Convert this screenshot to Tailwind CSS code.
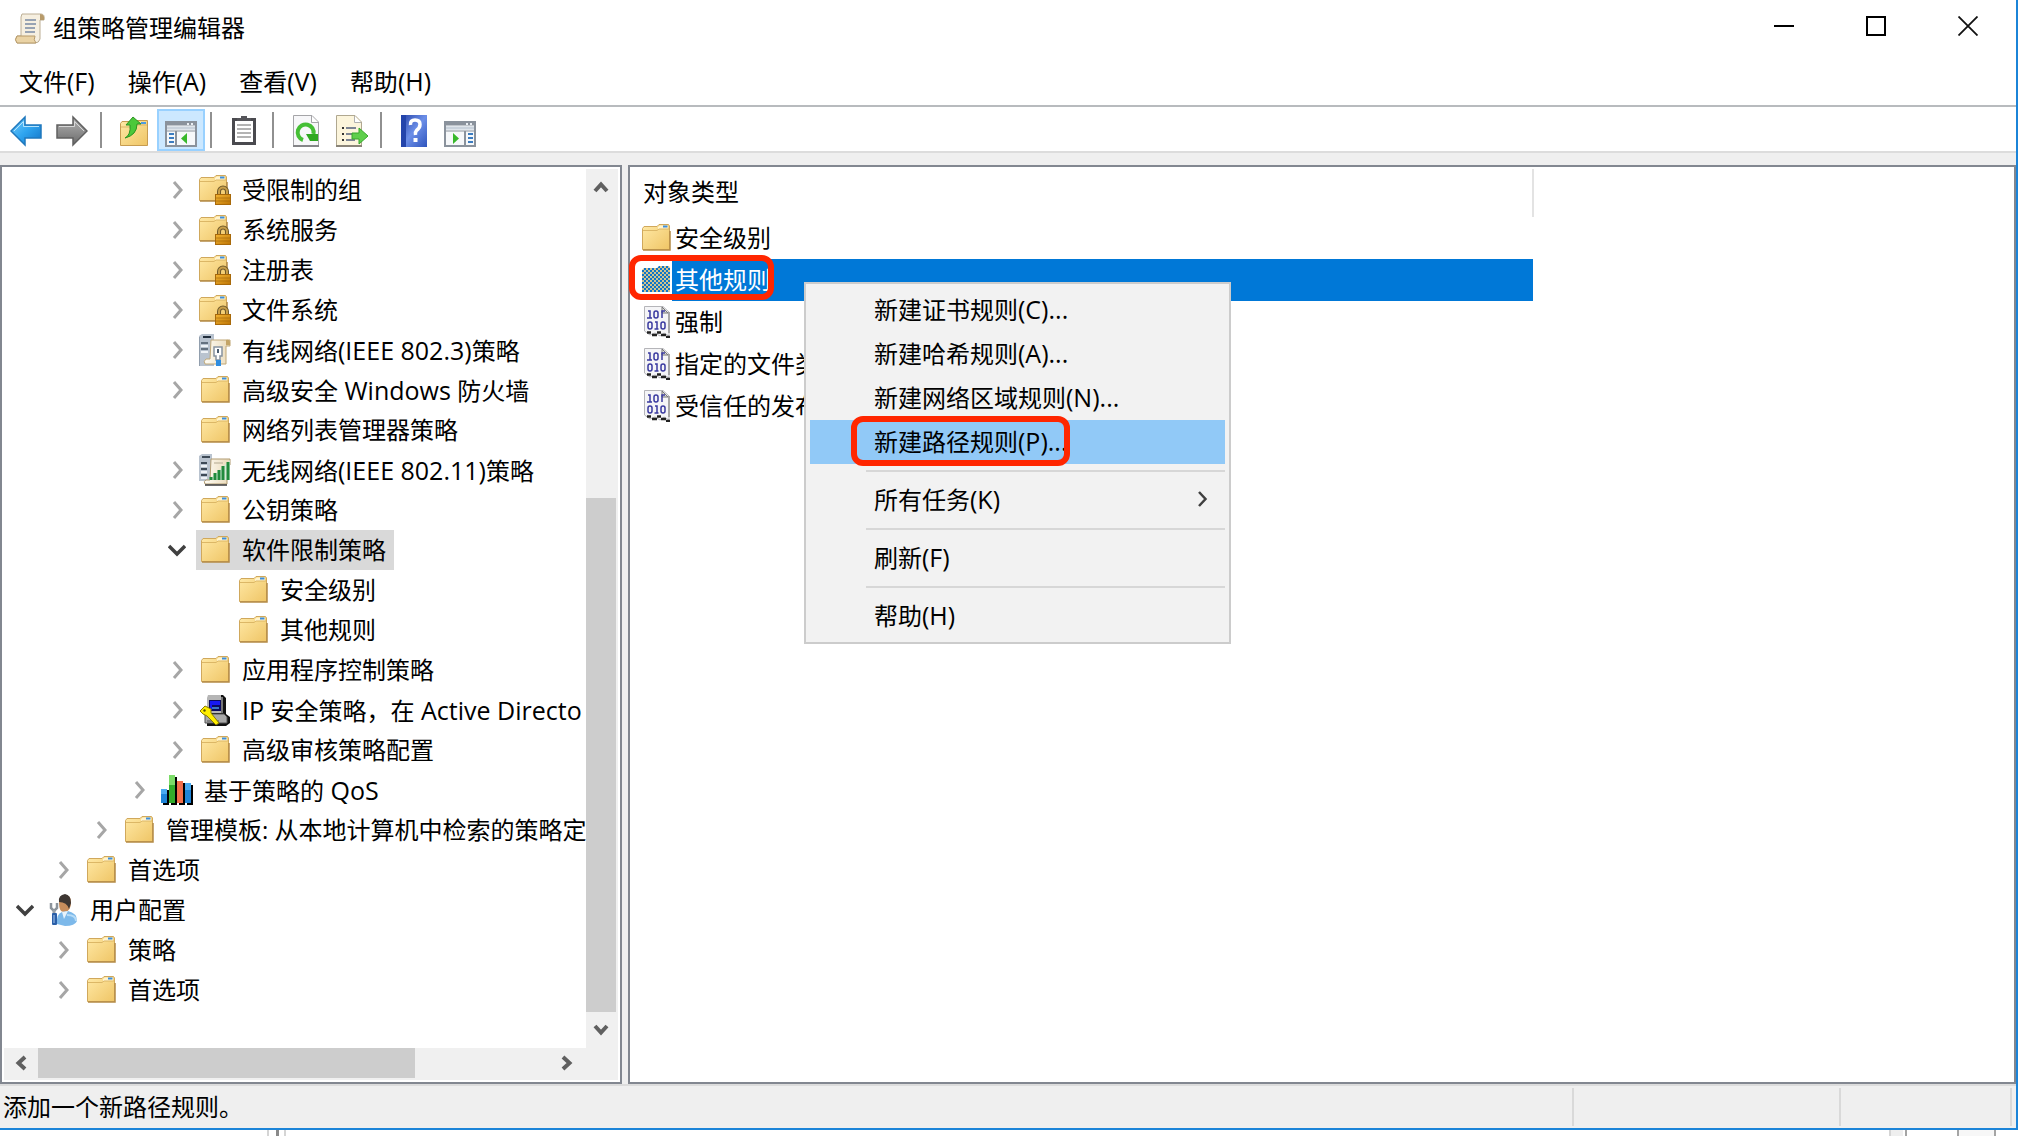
<!DOCTYPE html>
<html lang="zh-CN">
<head>
<meta charset="utf-8">
<title>组策略管理编辑器</title>
<script src="https://cdn.jsdelivr.net/npm/@tailwindcss/browser@4"></script>
</head>
<body class="min-h-screen bg-white font-['Open_Sans','Noto_Sans_CJK_SC',sans-serif] text-[24px] leading-[40px] text-black">
<svg class="absolute size-0" aria-hidden="true">
  <defs>
    <linearGradient id="gFolder" x1="0" y1="0" x2="1" y2="1"><stop offset="0" stop-color="#ffe9a6"/><stop offset="1" stop-color="#efc566"/></linearGradient>
    <linearGradient id="gBlue" x1="0" y1="0" x2="1" y2="1"><stop offset="0" stop-color="#7fd0fb"/><stop offset=".5" stop-color="#2fa5f0"/><stop offset="1" stop-color="#1272c4"/></linearGradient>
    <linearGradient id="gGray" x1="0" y1="0" x2="0" y2="1"><stop offset="0" stop-color="#b5b5b5"/><stop offset="1" stop-color="#6a6a6a"/></linearGradient>
    <linearGradient id="gHelp" x1="0" y1="0" x2="1" y2="1"><stop offset="0" stop-color="#2744a8"/><stop offset=".5" stop-color="#6c8fe8"/><stop offset="1" stop-color="#2f55bd"/></linearGradient>
    <linearGradient id="gLock" x1="0" y1="0" x2="1" y2="1"><stop offset="0" stop-color="#f3b533"/><stop offset="1" stop-color="#bd7506"/></linearGradient>
    <linearGradient id="gPaper" x1="0" y1="0" x2="1" y2="0"><stop offset="0" stop-color="#fffdf6"/><stop offset="1" stop-color="#e9d9b8"/></linearGradient>
    <pattern id="pSel" width="4" height="4" patternUnits="userSpaceOnUse"><rect width="4" height="4" fill="#d3c48d"/><path d="M0 0h2v2H0zM2 2h2v2H2z" fill="#0f75c9"/></pattern>
    <symbol id="folder" viewBox="0 0 32 32">
      <path d="M2.500 6.500 4 4.500H17L19 2.500H28.500L29.500 4V27.500H2.500Z" fill="url(#gFolder)" stroke="#d0a85c"/>
      <path d="M18 5 20 3.500H28V7H18Z" fill="#fff4cf"/><path d="M3 8.500H17L19 7H29" fill="none" stroke="#dcb766"/>
      <path d="M23 4.500h4.500" stroke="#3e8fdc" stroke-width="2"/><path d="M3 28H30V9" fill="none" stroke="#b48a45" stroke-width="1.500"/>
    </symbol>
    <symbol id="lockfolder" viewBox="0 0 32 32">
      <use href="#folder" x="-2" y="-1" width="32" height="32"/>
      <path d="M20 21V17.500a4 4 0 0 1 8 0V21" fill="none" stroke="#6f5a2c" stroke-width="4"/><path d="M20 21V17.500a4 4 0 0 1 8 0V21" fill="none" stroke="#c9a04a" stroke-width="2"/>
      <rect x="16.500" y="20.500" width="15" height="10" fill="url(#gLock)" stroke="#a8690a"/><path d="M17 24h14M17 27h14" stroke="#8f5a05" stroke-opacity=".5"/>
    </symbol>
    <symbol id="selfolder" viewBox="0 0 32 32"><path d="M2 6 4 4H17L19 2H29L30 4V28H2Z" fill="url(#pSel)"/></symbol>
    <symbol id="wired" viewBox="0 0 32 32">
      <path d="M0 2 3 0H15V32H0Z" fill="#b9c3cf"/><path d="M0 32V3" stroke="#8492a2" stroke-width="1.500"/><path d="M4 3h8" stroke="#222f3c" stroke-width="2"/><path d="M2 9h7M2 15h7" stroke="#64717f" stroke-width="2"/><path d="M2 12h7M2 18h7" stroke="#eef2f6" stroke-width="2"/>
      <path d="M12 6H31V12H27V30H6Q4 27 7 25H11Z" fill="url(#gPaper)" stroke="#c0a878"/><path d="M27 6Q32 5 31 11H27Z" fill="#c3a467"/>
      <path d="M15 13H23V22H21V26H17V22H15Z" fill="#fff" stroke="#8793a0" stroke-width="1.500"/><path d="M19 15v4" stroke="#4a5c70" stroke-width="2"/><path d="M17 26H22V32H17Z" fill="#2f8de0"/>
    </symbol>
    <symbol id="wireless" viewBox="0 0 32 32">
      <path d="M0 2 3 0H13V27H0Z" fill="#b9c3cf"/><path d="M3 3h8M2 9h6M2 15h6M2 21h6" stroke="#3e4a57" stroke-width="2"/><path d="M2 12h6M2 18h6M2 24h6" stroke="#eef2f6" stroke-width="2"/>
      <path d="M12 5H31V11H28V30H6Q4 27 7 26H11Z" fill="url(#gPaper)" stroke="#b09a70"/><path d="M15 9h9" stroke="#c8bfa8" stroke-width="1.500"/>
      <path d="M10 26 31 6V26Z" fill="#d4e9d6"/><path d="M12 26v-3M16 26v-7M20 26V16M24 26V12M29 26V8" stroke="#1f8a3c" stroke-width="3"/><path d="M6 31h22" stroke="#3a3a3a" stroke-width="1.500"/>
    </symbol>
    <symbol id="ipsec" viewBox="0 0 32 32">
      <path d="M9 1H24L27 4V20L31 23V29L27 32H8V20L9 18Z" fill="#111"/><path d="M9 1H22V19H8V4Z" fill="#b5b5b5"/><path d="M23 3V19" stroke="#ddd"/><rect x="10" y="6" width="12" height="11" fill="#0b0b5e"/><path d="M11 7H21V11H13V16H11Z" fill="#1818f0"/><path d="M13 14h7" stroke="#4a9be8" stroke-width="1.500"/>
      <path d="M6 20H25L28 23V29H6Z" fill="#a9a9a9" stroke="#555"/><path d="M8 27h12" stroke="#555"/>
      <path d="M1 17 6 12 12 15V19L20 29 17 31 8 22 4 20Z" fill="#ffee00" stroke="#8a7b00"/><circle cx="5.500" cy="16.500" r="1.200" fill="#5a5000"/>
    </symbol>
    <symbol id="qos" viewBox="0 0 32 32">
      <path d="M2 16H8V31H2ZM10 3H16V31H10ZM18 9H24V31H18ZM26 11H32V31H26Z" fill="#000"/><path d="M0 15H6V29H0ZM24 9H30V29H24Z" fill="#1f84d8"/><path d="M0 15H6V20H0ZM24 9H30V16H24Z" fill="#4aaaf0"/><path d="M8 1H14V29H8Z" fill="#33ad2b"/><path d="M8 1H14V11H8Z" fill="#7cdc68"/><path d="M16 7H22V29H16Z" fill="#f46f4b"/>
    </symbol>
    <symbol id="user" viewBox="0 0 32 32">
      <path d="M12 9Q12 1 18 1T24 8Q24 17 18 18T12 9Z" fill="#c78d5c"/><path d="M12 8Q11 1 18 0Q24 1 24 9L22 15Q20 8 12 8Z" fill="#3d3632"/>
      <path d="M10 30Q9 20 15 18L21 17Q30 19 30 27Q28 32 18 32Z" fill="#7db9ea"/><path d="M15 18 17 25 21 17Z" fill="#e8f3fc"/><path d="M20 21Q29 21 29 27" fill="none" stroke="#b7dcf7" stroke-width="2"/>
      <path d="M4 9V14L7 17 10 14V9" fill="none" stroke="#8b939b" stroke-width="2.500"/><path d="M7 16V20" stroke="#9aa2aa" stroke-width="3"/><rect x="5" y="19" width="5" height="12" rx="1" fill="#2a5fa8"/><path d="M7 21v8" stroke="#a9c8ee"/>
    </symbol>
    <symbol id="object" viewBox="0 0 32 32">
      <path d="M4.500 .500H23L29 6V30L24 27 20 30 15 27 10 29 4.500 25Z" fill="#f5f5f7" stroke="#b5b5b9"/><path d="M22 1V7H28Z" fill="#ddd" stroke="#777"/><path d="M29 6V27" stroke="#777"/>
      <path d="M8 5h2v7M7 12h5M22 12V5h3" fill="none" stroke="#3a3aa0" stroke-width="1.500"/><rect x="14" y="5" width="4" height="7" rx="2" fill="none" stroke="#3a3aa0" stroke-width="1.500"/>
      <rect x="8" y="16" width="4" height="7" rx="2" fill="none" stroke="#3a3aa0" stroke-width="1.500"/><rect x="21" y="16" width="4" height="7" rx="2" fill="none" stroke="#3a3aa0" stroke-width="1.500"/><path d="M15 16h2v7M14.500 23h4" fill="none" stroke="#3a3aa0" stroke-width="1.500"/>
      <path d="M7 26.500H11M12 29H17M17 26.500H21M21 29H26M26 31H30" fill="none" stroke="#222" stroke-width="2.500"/>
    </symbol>
    <symbol id="chev" viewBox="0 0 18 18"><path d="M6 1 13 9 6 17" fill="none" stroke="#a6a6a6" stroke-width="3"/></symbol>
    <symbol id="open" viewBox="0 0 18 18"><path d="M1 5 9 13 17 5" fill="none" stroke="#404040" stroke-width="3.500"/></symbol>
    <symbol id="scroll" viewBox="0 0 16 16"><path d="M2 12 8 5.500 14 12" fill="none" stroke="#606060" stroke-width="4"/></symbol>
    <symbol id="winicon" viewBox="0 0 32 32"><rect x="1" y="7" width="30" height="24" fill="#f6f8fa" stroke="#8a929c" stroke-width="2"/><path d="M1 9H31" stroke="#8a929c" stroke-width="3"/><path d="M22 9h2M26 9h2" stroke="#e9eef3" stroke-width="2"/><path d="M2 13H30" stroke="#c9d2dc" stroke-width="3"/><path d="M2 16H30" stroke="#8a929c"/></symbol>
  </defs>
</svg>

<div class="flex min-h-screen flex-col">
  <div class="flex flex-1 flex-col border-r-2 border-b-2 border-[#1b84d8]">
    <header class="flex h-[58px] items-center pb-[2px] pl-[14px]">
      <svg class="size-8" viewBox="0 0 32 32"><path d="M8 2H27Q31 2 30 8H26V27Q25 31 21 31H3Q0 27 3 24H7V5Z" fill="#f6efe0" stroke="#bcae94"/><path d="M26 2Q31 2 30 8H26Z" fill="#b79a6a"/><path d="M3 24H21Q19 28 22 31H3Q0 28 3 24Z" fill="#ead3a5" stroke="#b79a6a"/><path d="M11 8h11M11 12h11M11 16h10M11 20h10" stroke="#98a3b3" stroke-width="2"/></svg>
      <h1 class="ml-[7px] flex-1">组策略管理编辑器</h1>
      <div class="flex self-start">
        <button class="grid h-[52px] w-[92px] place-items-center" aria-label="最小化"><svg class="size-5" viewBox="0 0 20 20"><path d="M0 10H20" stroke="#000" stroke-width="2"/></svg></button>
        <button class="grid h-[52px] w-[92px] place-items-center" aria-label="最大化"><svg class="size-5" viewBox="0 0 20 20"><rect x="1" y="1" width="18" height="18" fill="none" stroke="#000" stroke-width="2"/></svg></button>
        <button class="mr-[2px] grid h-[52px] w-[92px] place-items-center" aria-label="关闭"><svg class="size-5" viewBox="0 0 20 20"><path d="M.500 .500 19.500 19.500M19.500 .500 .500 19.500" stroke="#111" stroke-width="1.800"/></svg></button>
      </div>
    </header>

    <nav class="flex h-[49px] items-center gap-[33px] border-b-2 border-[#b8bbbe] pl-[19px]">
      <button>文件<span class="text-[25px]">(F)</span></button><button>操作<span class="text-[25px]">(A)</span></button><button>查看<span class="text-[25px]">(V)</span></button><button>帮助<span class="text-[25px]">(H)</span></button>
    </nav>

    <div class="flex h-[46px] items-center border-b-2 border-[#dcdcdc] pt-[2px] pl-[3px]">
      <button class="grid h-[42px] w-[46px] place-items-center pt-[2px]" aria-label="后退"><svg class="size-8" viewBox="0 0 32 32"><path d="M1 16 15 2V10H31V23H15V30Z" fill="url(#gBlue)" stroke="#1f78bd" stroke-width="1.500"/><path d="M4 16 13.500 6.500V11.500H29" fill="none" stroke="#b5e4fd"/></svg></button>
      <button class="grid h-[42px] w-[46px] place-items-center pt-[2px]" aria-label="前进"><svg class="size-8" viewBox="0 0 32 32"><path d="M31 16 17 2V10H1V23H17V30Z" fill="url(#gGray)" stroke="#606060" stroke-width="1.500"/><path d="M3 11.500H18.500V6.500L28 16" fill="none" stroke="#d8d8d8"/></svg></button>
      <div class="mr-[9px] ml-[5px] h-9 w-[2px] bg-[#909090]"></div>
      <button class="grid h-[42px] w-[46px] place-items-center pt-[2px]" aria-label="上移一级"><svg class="size-8" viewBox="0 0 32 32"><path d="M2.500 8.500 4 6.500H17L19 5.500H29.500V30.500H2.500Z" fill="url(#gFolder)" stroke="#c79c50"/><path d="M3 12H17L19 10H29" fill="none" stroke="#dcb766"/><path d="M23 8h5" stroke="#4f9be0" stroke-width="2"/><path d="M7 23Q13 20 12 10H8L15 2 23 9H19Q19 20 7 23Z" fill="#4cc83a" stroke="#2c9422"/></svg></button>
      <button class="grid h-[42px] w-12 place-items-center border-2 border-[#99d1ff] bg-[#cce8ff] pt-[2px]" aria-label="显示/隐藏控制台树"><svg class="size-8" viewBox="0 0 32 32"><use href="#winicon"/><path d="M11 16V30" stroke="#8a929c" stroke-width="2"/><path d="M4 19h5M4 23h5M4 27h5" stroke="#3b7cc0" stroke-width="2"/><path d="M22 18V29L16 23.500Z" fill="#38b82c"/></svg></button>
      <div class="mr-[9px] ml-[5px] h-9 w-[2px] bg-[#909090]"></div>
      <button class="grid h-[42px] w-[46px] place-items-center pt-[2px]" aria-label="属性"><svg class="size-8" viewBox="0 0 32 32"><rect x="5.500" y="4.500" width="21" height="24" fill="#fff" stroke="#4a4a4f" stroke-width="3"/><path d="M9 10h14M9 14h14M9 18h14M9 22h14" stroke="#9a9a9a" stroke-width="1.500"/><path d="M9 3H13V1H19V3H23V6H9Z" fill="#55555a"/></svg></button>
      <div class="mr-[9px] ml-[5px] h-9 w-[2px] bg-[#909090]"></div>
      <button class="grid h-[42px] w-[46px] place-items-center pt-[2px]" aria-label="刷新"><svg class="size-8" viewBox="0 0 32 32"><path d="M3.500 .500H22L28.500 7V31H3.500Z" fill="#f7f7f9" stroke="#a5a5a8"/><path d="M3 31H29" stroke="#858588" stroke-width="2"/><path d="M21.500 1V7.500H28" fill="#fff" stroke="#a5a5a8"/><path d="M13 25A8 8 0 1 1 23.500 19" fill="none" stroke="#45bf35" stroke-width="4"/><path d="M16 19H28V26H20Z" fill="#2fa821"/></svg></button>
      <button class="grid h-[42px] w-[46px] place-items-center pt-[2px]" aria-label="导出列表"><svg class="size-8" viewBox="0 0 32 32"><path d="M.500 .500H19L25.500 7V31H.500Z" fill="#fcf5dc" stroke="#b0a890"/><path d="M0 31H26" stroke="#8a8478" stroke-width="2"/><path d="M18.500 1V7.500H25" fill="#fff" stroke="#b0b0b0"/><path d="M6 13h2M6 19h2M6 25h2" stroke="#333" stroke-width="2"/><path d="M10 13h10M10 19h6M10 25h9" stroke="#7d8594" stroke-width="2"/><path d="M16 18H23V13L32 21 23 29V24H16Z" fill="#5fcf4c" stroke="#38a82c"/></svg></button>
      <div class="mr-[9px] ml-[5px] h-9 w-[2px] bg-[#909090]"></div>
      <button class="grid h-[42px] w-[46px] place-items-center pt-[2px]" aria-label="帮助"><svg class="size-8" viewBox="0 0 32 32"><rect x="3" width="26" height="32" fill="url(#gHelp)"/><path d="M3 0H8V32H3Z" fill="#2344ab"/><path d="M12.500 10Q12 5 17 5T22 9.500Q22 13 18.500 15.500Q17 17 17.500 20" fill="none" stroke="#fff" stroke-width="3.500"/><path d="M15.500 23h4v4h-4z" fill="#fff"/></svg></button>
      <button class="grid h-[42px] w-[46px] place-items-center pt-[2px]" aria-label="显示/隐藏操作窗格"><svg class="size-8" viewBox="0 0 32 32"><use href="#winicon"/><path d="M21 16V30" stroke="#8a929c" stroke-width="2"/><path d="M24 19h5M24 23h5M24 27h5" stroke="#3b7cc0" stroke-width="2"/><path d="M9 18V29L15 23.500Z" fill="#38b82c"/></svg></button>
    </div>

    <main class="flex flex-1 gap-[6px] bg-[#efefef] pt-3">
      <section class="flex w-[622px] shrink-0 flex-col border-2 border-[#828790] bg-white pr-[2px] pb-[2px]">
        <div class="flex flex-1">
          <ul class="w-0 flex-1 overflow-hidden pt-[3px] whitespace-nowrap">
            <li class="flex h-10 items-center pl-[166px]"><svg class="mr-[10px] size-[18px] shrink-0"><use href="#chev"/></svg><span class="flex items-center gap-[11px] pr-2 pl-[3px]"><svg class="size-8"><use href="#lockfolder"/></svg>受限制的组</span></li>
            <li class="flex h-10 items-center pl-[166px]"><svg class="mr-[10px] size-[18px] shrink-0"><use href="#chev"/></svg><span class="flex items-center gap-[11px] pr-2 pl-[3px]"><svg class="size-8"><use href="#lockfolder"/></svg>系统服务</span></li>
            <li class="flex h-10 items-center pl-[166px]"><svg class="mr-[10px] size-[18px] shrink-0"><use href="#chev"/></svg><span class="flex items-center gap-[11px] pr-2 pl-[3px]"><svg class="size-8"><use href="#lockfolder"/></svg>注册表</span></li>
            <li class="flex h-10 items-center pl-[166px]"><svg class="mr-[10px] size-[18px] shrink-0"><use href="#chev"/></svg><span class="flex items-center gap-[11px] pr-2 pl-[3px]"><svg class="size-8"><use href="#lockfolder"/></svg>文件系统</span></li>
            <li class="flex h-10 items-center pl-[166px]"><svg class="mr-[10px] size-[18px] shrink-0"><use href="#chev"/></svg><span class="flex items-center gap-[11px] pr-2 pl-[3px]"><svg class="size-8"><use href="#wired"/></svg><span>有线网络<span class="text-[25px]">(IEEE 802.3)</span>策略</span></span></li>
            <li class="flex h-10 items-center pl-[166px]"><svg class="mr-[10px] size-[18px] shrink-0"><use href="#chev"/></svg><span class="flex items-center gap-[11px] pr-2 pl-[3px]"><svg class="size-8"><use href="#folder"/></svg><span>高级安全<span class="text-[25px]"> Windows </span>防火墙</span></span></li>
            <li class="flex h-10 items-center pl-[194px]"><span class="flex items-center gap-[11px] pr-2 pl-[3px]"><svg class="size-8"><use href="#folder"/></svg>网络列表管理器策略</span></li>
            <li class="flex h-10 items-center pl-[166px]"><svg class="mr-[10px] size-[18px] shrink-0"><use href="#chev"/></svg><span class="flex items-center gap-[11px] pr-2 pl-[3px]"><svg class="size-8"><use href="#wireless"/></svg><span>无线网络<span class="text-[25px]">(IEEE 802.11)</span>策略</span></span></li>
            <li class="flex h-10 items-center pl-[166px]"><svg class="mr-[10px] size-[18px] shrink-0"><use href="#chev"/></svg><span class="flex items-center gap-[11px] pr-2 pl-[3px]"><svg class="size-8"><use href="#folder"/></svg>公钥策略</span></li>
            <li class="flex h-10 items-center pl-[166px]"><svg class="mr-[10px] size-[18px] shrink-0"><use href="#open"/></svg><span class="flex items-center gap-[11px] bg-[#d9d9d9] pr-2 pl-[3px]"><svg class="size-8"><use href="#folder"/></svg>软件限制策略</span></li>
            <li class="flex h-10 items-center pl-[232px]"><span class="flex items-center gap-[11px] pr-2 pl-[3px]"><svg class="size-8"><use href="#folder"/></svg>安全级别</span></li>
            <li class="flex h-10 items-center pl-[232px]"><span class="flex items-center gap-[11px] pr-2 pl-[3px]"><svg class="size-8"><use href="#folder"/></svg>其他规则</span></li>
            <li class="flex h-10 items-center pl-[166px]"><svg class="mr-[10px] size-[18px] shrink-0"><use href="#chev"/></svg><span class="flex items-center gap-[11px] pr-2 pl-[3px]"><svg class="size-8"><use href="#folder"/></svg>应用程序控制策略</span></li>
            <li class="flex h-10 items-center pl-[166px]"><svg class="mr-[10px] size-[18px] shrink-0"><use href="#chev"/></svg><span class="flex items-center gap-[11px] pl-[3px]"><svg class="size-8 shrink-0"><use href="#ipsec"/></svg><span><span class="text-[25px]">IP </span>安全策略，在<span class="text-[25px]"> Active Directo</span></span></span></li>
            <li class="flex h-10 items-center pl-[166px]"><svg class="mr-[10px] size-[18px] shrink-0"><use href="#chev"/></svg><span class="flex items-center gap-[11px] pr-2 pl-[3px]"><svg class="size-8"><use href="#folder"/></svg>高级审核策略配置</span></li>
            <li class="flex h-10 items-center pl-[128px]"><svg class="mr-[10px] size-[18px] shrink-0"><use href="#chev"/></svg><span class="flex items-center gap-[11px] pr-2 pl-[3px]"><svg class="size-8"><use href="#qos"/></svg><span>基于策略的<span class="text-[25px]"> QoS</span></span></span></li>
            <li class="flex h-10 items-center pl-[90px]"><svg class="mr-[10px] size-[18px] shrink-0"><use href="#chev"/></svg><span class="flex items-center gap-[11px] pl-[3px]"><svg class="size-8 shrink-0"><use href="#folder"/></svg>管理模板: 从本地计算机中检索的策略定</span></li>
            <li class="flex h-10 items-center pl-[52px]"><svg class="mr-[10px] size-[18px] shrink-0"><use href="#chev"/></svg><span class="flex items-center gap-[11px] pr-2 pl-[3px]"><svg class="size-8"><use href="#folder"/></svg>首选项</span></li>
            <li class="flex h-10 items-center pl-[14px]"><svg class="mr-[10px] size-[18px] shrink-0"><use href="#open"/></svg><span class="flex items-center gap-[11px] pr-2 pl-[3px]"><svg class="size-8"><use href="#user"/></svg>用户配置</span></li>
            <li class="flex h-10 items-center pl-[52px]"><svg class="mr-[10px] size-[18px] shrink-0"><use href="#chev"/></svg><span class="flex items-center gap-[11px] pr-2 pl-[3px]"><svg class="size-8"><use href="#folder"/></svg>策略</span></li>
            <li class="flex h-10 items-center pl-[52px]"><svg class="mr-[10px] size-[18px] shrink-0"><use href="#chev"/></svg><span class="flex items-center gap-[11px] pr-2 pl-[3px]"><svg class="size-8"><use href="#folder"/></svg>首选项</span></li>
          </ul>
          <div class="mt-[2px] flex w-8 flex-col bg-[#f0f0f0]">
            <button class="grid h-9 w-[30px] place-items-center" aria-label="向上滚动"><svg class="size-4"><use href="#scroll"/></svg></button>
            <div class="flex-1"></div>
            <div class="h-[514px] w-[30px] bg-[#cdcdcd]"></div>
            <button class="grid h-9 w-[30px] place-items-center" aria-label="向下滚动"><svg class="size-4 rotate-180"><use href="#scroll"/></svg></button>
          </div>
        </div>
        <div class="ml-[2px] flex h-8 bg-[#f0f0f0]">
          <button class="grid h-[30px] w-[34px] place-items-center" aria-label="向左滚动"><svg class="size-4 -rotate-90"><use href="#scroll"/></svg></button>
          <div class="h-[30px] w-[377px] bg-[#cdcdcd]"></div>
          <div class="flex-1"></div>
          <button class="mr-[34px] grid h-[30px] w-[34px] place-items-center" aria-label="向右滚动"><svg class="size-4 rotate-90"><use href="#scroll"/></svg></button>
        </div>
      </section>

      <section class="relative flex-1 border-2 border-[#828790] bg-white pt-[2px]">
        <table class="w-[904px] border-collapse text-left whitespace-nowrap">
          <thead><tr><th class="h-12 border-r-2 border-[#e3e3e3] py-0 pr-0 pl-[13px] font-normal"><div class="h-12 leading-[46px]">对象类型</div></th></tr></thead>
          <tbody>
            <tr><td class="p-0"><div class="flex h-[42px] items-center gap-[3px] pl-[10px]"><svg class="size-8"><use href="#folder"/></svg>安全级别</div></td></tr>
            <tr><td class="p-0"><div class="relative flex h-[42px] items-center pl-[10px]"><svg class="size-8"><use href="#selfolder"/></svg><span class="h-[42px] flex-1 bg-[#0078d7] pl-[3px] leading-[42px] text-white">其他规则</span><div class="absolute -top-1 -left-px h-[45px] w-[145px] rounded-xl border-[6px] border-[#ff2600]"></div></div></td></tr>
            <tr><td class="p-0"><div class="flex h-[42px] items-center gap-[3px] pl-[10px]"><svg class="size-8"><use href="#object"/></svg>强制</div></td></tr>
            <tr><td class="p-0"><div class="flex h-[42px] items-center gap-[3px] pl-[10px]"><svg class="size-8"><use href="#object"/></svg>指定的文件类型</div></td></tr>
            <tr><td class="p-0"><div class="flex h-[42px] items-center gap-[3px] pl-[10px]"><svg class="size-8"><use href="#object"/></svg>受信任的发布者</div></td></tr>
          </tbody>
        </table>

        <div role="menu" class="absolute top-[115px] left-[174px] flex w-[427px] flex-col border-2 border-[#cccccc] bg-[#f2f2f2] p-1 whitespace-nowrap">
          <button role="menuitem" class="h-11 pb-[2px] pl-16 text-left">新建证书规则<span class="text-[25px]">(C)...</span></button>
          <button role="menuitem" class="h-11 pb-[2px] pl-16 text-left">新建哈希规则<span class="text-[25px]">(A)...</span></button>
          <button role="menuitem" class="h-11 pb-[2px] pl-16 text-left">新建网络区域规则<span class="text-[25px]">(N)...</span></button>
          <button role="menuitem" class="relative h-11 bg-[#91c9f7] pb-[2px] pl-16 text-left">新建路径规则<span class="text-[25px]">(P)...</span><span class="absolute -top-1 left-[41px] h-[50px] w-[219px] rounded-xl border-[6px] border-[#ff2600]"></span></button>
          <hr class="my-[6px] ml-14 border-t-2 border-[#d7d7d7]">
          <button role="menuitem" class="flex h-11 items-center justify-between pr-[14px] pb-[2px] pl-16"><span>所有任务<span class="text-[25px]">(K)</span></span><svg class="size-[18px]" viewBox="0 0 18 18"><path d="M6 2 12.500 9 6 16" fill="none" stroke="#404040" stroke-width="2.500"/></svg></button>
          <hr class="my-[6px] ml-14 border-t-2 border-[#d7d7d7]">
          <button role="menuitem" class="h-11 pb-[2px] pl-16 text-left">刷新<span class="text-[25px]">(F)</span></button>
          <hr class="my-[6px] ml-14 border-t-2 border-[#d7d7d7]">
          <button role="menuitem" class="h-11 pb-[2px] pl-16 text-left">帮助<span class="text-[25px]">(H)</span></button>
        </div>
      </section>
    </main>

    <footer class="flex h-[44px] items-center border-t-2 border-[#dcdcdc] bg-[#efefef] pr-1 pl-[3px]">
      <p class="flex-1">添加一个新路径规则。</p>
      <div class="h-[38px] w-[267px] border-l-2 border-[#d9d9d9]"></div>
      <div class="h-[38px] w-[173px] border-x-2 border-[#d9d9d9]"></div>
    </footer>
  </div>
  <div class="flex h-[6px] justify-between bg-white pr-[22px] pl-[267px]">
    <div class="w-[19px] border-x-2 border-[#d5d5d5] px-[7px]"><div class="h-full w-[3px] bg-[#8a8a8a]"></div></div>
    <div class="flex"><div class="w-[14px] border-l-2 border-[#d5d5d5] bg-[#efefef]"></div><div class="ml-[2px] w-[52px] border-l-2 border-[#a5a5a5]"></div><div class="w-[39px] border-x-2 border-[#a5a5a5] bg-[#f7f7f7]"></div></div>
  </div>
</div>
</body>
</html>
